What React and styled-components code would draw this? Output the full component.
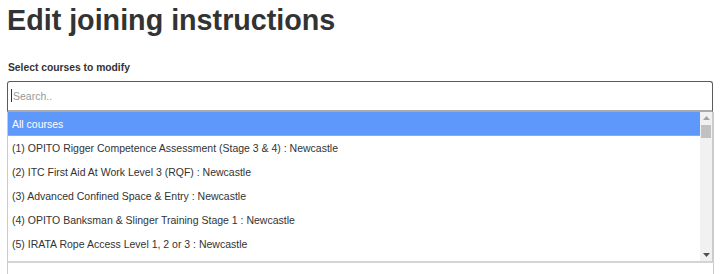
import React from "react";
import styled, { createGlobalStyle } from "styled-components";

const Global = createGlobalStyle`
  html, body { margin: 0; padding: 0; background: #fff; }
  body { font-family: "Liberation Sans", Arial, sans-serif; color: #333; overflow: hidden; }
`;

const Page = styled.div`
  padding: 0 14px 0 7px;
`;

const Title = styled.h1`
  margin: 4px 0 0 0;
  font-size: 28.7px;
  line-height: 33px;
  font-weight: 700;
  color: #333;
`;

const Label = styled.label`
  display: block;
  margin-top: 24px;
  margin-left: 1px;
  font-size: 10.3px;
  line-height: 14px;
  font-weight: 700;
  color: #333;
`;

const Field = styled.div`
  position: relative;
  margin-top: 6px;
`;

const SearchBox = styled.div`
  position: relative;
  height: 28px;
  border: 1px solid #5a5a5a;
  border-bottom: 2px solid #aaa;
  border-radius: 3px 3px 0 0;
  background: #fff;
  display: flex;
  align-items: center;
  padding-left: 5px;
`;

const SearchInput = styled.input`
  border: none;
  outline: none;
  padding: 0;
  width: 100%;
  font-family: "Liberation Sans", Arial, sans-serif;
  font-size: 10.5px;
  color: #333;
  background: transparent;
  &::placeholder { color: #999; }
`;

const Caret = styled.span`
  position: absolute;
  left: 3px;
  top: 7px;
  width: 1px;
  height: 13px;
  background: #333;
`;

const Underlay = styled.div`
  height: 170px;
  border: 1px solid #ccc;
  border-top: none;
  margin-right: -1px;
  background: #fff;
`;

const Dropdown = styled.div`
  position: absolute;
  left: 0;
  right: 0;
  top: 31px;
  height: 149px;
  border-left: 1px solid #ccc;
  border-right: 1px solid #ccc;
  border-bottom: 2px solid #d4d4d4;
  background: #fff;
  display: flex;
`;

const Results = styled.ul`
  flex: 1;
  list-style: none;
  margin: 0;
  padding: 0;
  overflow: hidden;
`;

const Item = styled.li`
  height: 24px;
  line-height: 24px;
  padding-left: 4px;
  font-size: 10.5px;
  white-space: nowrap;
  color: ${(p) => (p.$active ? "#fff" : "#333")};
  background: ${(p) => (p.$active ? "#5f98fb" : "transparent")};
  border-bottom: ${(p) => (p.$active ? "1px solid #7aaefc" : "none")};
  box-sizing: border-box;
`;

const Scrollbar = styled.div`
  width: 12px;
  background: #f1f1f1;
  display: flex;
  flex-direction: column;
  align-items: center;
`;

const Arrow = styled.div`
  height: 12px;
  display: flex;
  align-items: center;
  justify-content: center;
`;

const Thumb = styled.div`
  width: 10px;
  height: 13px;
  background: #c1c1c1;
  margin-top: 1px;
`;

const Spacer = styled.div`
  flex: 1;
`;

const courses = [
  "(1) OPITO Rigger Competence Assessment (Stage 3 & 4) : Newcastle",
  "(2) ITC First Aid At Work Level 3 (RQF) : Newcastle",
  "(3) Advanced Confined Space & Entry : Newcastle",
  "(4) OPITO Banksman & Slinger Training Stage 1 : Newcastle",
  "(5) IRATA Rope Access Level 1, 2 or 3 : Newcastle",
];

export default function App() {
  return (
    <Page>
      <Global />
      <Title>Edit joining instructions</Title>
      <Label>Select courses to modify</Label>
      <Field>
        <SearchBox>
          <Caret />
          <SearchInput placeholder="Search.." />
        </SearchBox>
        <Underlay />
        <Dropdown>
          <Results>
            <Item $active>All courses</Item>
            {courses.map((c) => (
              <Item key={c}>{c}</Item>
            ))}
          </Results>
          <Scrollbar>
            <Arrow>
              <svg width="7" height="4" viewBox="0 0 7 4"><path d="M0 4 L3.5 0 L7 4 Z" fill="#a3a3a3" /></svg>
            </Arrow>
            <Thumb />
            <Spacer />
            <Arrow>
              <svg width="7" height="4" viewBox="0 0 7 4"><path d="M0 0 L7 0 L3.5 4 Z" fill="#505050" /></svg>
            </Arrow>
          </Scrollbar>
        </Dropdown>
      </Field>
    </Page>
  );
}
